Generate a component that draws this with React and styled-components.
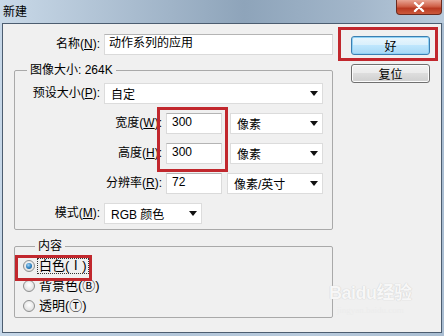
import { createGlobalStyle, styled, css } from "styled-components";

const Global = createGlobalStyle`
    html, body {
        margin: 0;
        padding: 0;
        background: #c3d4e5;
    }
    * { box-sizing: border-box; }
`

const Window = styled.div`
    width: 444px;
    height: 336px;
    overflow: hidden;
    background: linear-gradient(90deg, #c6d7e8 0%, #b3c6d9 40%, #b8cadc 70%, #a9bdd1 100%);
    font-family: "Liberation Sans", "Noto Sans CJK SC", sans-serif;
    font-size: 12px;
    color: #000;
`

const TitleBar = styled.div`
    height: 23px;
    display: flex;
    justify-content: space-between;
    align-items: flex-start;
    padding-left: 3px;
    background: linear-gradient(90deg, #c9d9e8 0%, #a9bccf 30%, #8ea4ba 55%, #a2b6ca 80%, #b9cbdc 100%);
`

const Title = styled.div`
    padding-top: 4px;
    line-height: 14px;
    font-family: "Noto Sans CJK SC", sans-serif;
    font-size: 12px;
`

const CloseBtn = styled.div`
    width: 46px;
    height: 15px;
    margin-right: 2px;
    border: 1px solid #6b2a1e;
    border-top: none;
    border-radius: 0 0 4px 4px;
    background: linear-gradient(180deg, #e8a493 0%, #d0624a 45%, #b93a22 60%, #cc5a3c 100%);
    display: flex;
    justify-content: center;
    align-items: center;
`

const Body = styled.div`
    position: relative;
    height: 310px;
    margin: 0 2px;
    border: 1px solid #4c5d70;
    background: #f0f0f0;
    display: flex;
`

const LeftCol = styled.div`
    width: 330px;
    padding-left: 11px;
`

const RightCol = styled.div`
    display: flex;
    flex-direction: column;
    gap: 9px;
    padding-top: 12px;
    margin-left: 18px;
`

const Row = styled.div`
    display: flex;
    align-items: center;
    height: 21px;
    margin-top: ${p => p.$mt || 0}px;
`

const Label = styled.div`
    width: ${p => p.$w}px;
    margin-right: 4px;
    text-align: right;
    white-space: nowrap;
    line-height: 21px;

    u {
        text-underline-offset: 1px;
    }
`

const Field = styled.div`
    width: ${p => p.$w}px;
    height: 21px;
    margin-right: ${p => p.$mr || 0}px;
    background: #fff;
    border: 1px solid #dadada;
    border-top-color: #b4b4b4;
    padding-left: ${p => p.$pl || 5}px;
    line-height: 17px;
    white-space: nowrap;
`

const Select = styled.div`
    width: ${p => p.$w}px;
    height: 21px;
    background: #fff;
    border: 1px solid #dcdcdc;
    display: flex;
    align-items: center;
    justify-content: space-between;
    padding: 0 4px 0 6px;
    white-space: nowrap;
`

const Group = styled.fieldset`
    margin: ${p => p.$mt}px 0 0 0;
    padding: ${p => p.$pad};
    border: 1px solid #a9a9a9;
    border-radius: 2px;
    min-width: 0;

    legend {
        margin-left: 12px;
        padding: 0 3px;
        line-height: 14px;
        font-size: 12px;
    }
`

const RowStack = styled.div`
    display: flex;
    flex-direction: column;
    gap: ${p => p.$gap}px;
`

const RadioRow = styled.div`
    display: flex;
    align-items: center;
    height: 20px;
    font-size: 13px;
`

const RadioDot = styled.span`
    width: 12px;
    height: 12px;
    border-radius: 50%;
    margin-right: 3px;
    border: 1px solid #8e8f8f;
    background: radial-gradient(circle at 50% 40%, #ffffff 0%, #e6e6e6 60%, #cfcfcf 100%);
    display: inline-flex;
    align-items: center;
    justify-content: center;

    ${p => p.$checked && css`
        &::after {
            content: "";
            width: 6px;
            height: 6px;
            border-radius: 50%;
            background: radial-gradient(circle at 40% 35%, #a5d4f5 0%, #2a7fbf 55%, #1b4f7d 100%);
        }
    `}
`

const RadioText = styled.span`
    line-height: 14px;
    padding: 0 1px;
    outline: ${p => p.$focus ? "1px dotted #333" : "none"};
`

const Button = styled.div`
    width: 79px;
    height: 19px;
    border-radius: 3px;
    display: flex;
    align-items: center;
    justify-content: center;
    font-family: "Noto Sans CJK SC", sans-serif;
    font-size: 12px;
    border: 1px solid ${p => p.$primary ? "#3c7fb1" : "#707070"};
    background: ${p => p.$primary
        ? "linear-gradient(180deg, #eaf6fd 0%, #d9f0fc 45%, #bee6fd 50%, #a7d9f5 100%)"
        : "linear-gradient(180deg, #f2f2f2 0%, #ebebeb 45%, #dddddd 50%, #cfcfcf 100%)"};
    box-shadow: inset 0 0 0 1px ${p => p.$primary ? "#90d2f5" : "#fcfcfc"};
`

const Highlight = styled.div`
    position: absolute;
    left: ${p => p.$x - 3}px;
    top: ${p => p.$y - 24}px;
    width: ${p => p.$w}px;
    height: ${p => p.$h}px;
    border: 3px solid #c1272d;
    pointer-events: none;
`

const Watermark = styled.div`
    position: absolute;
    left: 326px;
    top: 258px;
    display: flex;
    flex-direction: column;
    align-items: center;
    color: #f7f7f7;
    text-shadow: 0 0 1px #d2d2d2, 0 0 1px #d2d2d2;
    pointer-events: none;

    b {
        font-family: "Liberation Sans", "Noto Sans CJK SC", sans-serif;
        font-size: 18px;
        line-height: 22px;
        letter-spacing: -0.5px;
    }

    span {
        font-family: "Liberation Serif", serif;
        font-size: 9px;
        line-height: 12px;
        color: #ececec;
        text-shadow: none;
    }
`

const Arrow = () => (
    <svg width="8" height="5" viewBox="0 0 8 5">
        <path d="M0 0 H8 L4 5 Z" fill="#111" />
    </svg>
)

function App() {
    return (
        <Window>
            <Global />
            <TitleBar>
                <Title>新建</Title>
                <CloseBtn>
                    <svg width="12" height="10" viewBox="0 0 12 10">
                        <path d="M2 1 L10 9 M10 1 L2 9" stroke="#fff" strokeWidth="2.4" strokeLinecap="round" />
                    </svg>
                </CloseBtn>
            </TitleBar>
            <Body>
                <LeftCol>
                    <Row $mt={10}>
                        <Label $w={86}>名称(<u>N</u>):</Label>
                        <Field $w={229} $pl={4}>动作系列的应用</Field>
                    </Row>

                    <Group $mt={8} $pad="6px 8px 5px 0">
                        <legend>图像大小: 264K</legend>
                        <RowStack $gap={9}>
                            <Row>
                                <Label $w={85}>预设大小(<u>P</u>):</Label>
                                <Select $w={219}>自定<Arrow /></Select>
                            </Row>
                            <Row>
                                <Label $w={147}>宽度(<u>W</u>):</Label>
                                <Field $w={56} $mr={8}>300</Field>
                                <Select $w={93}>像素<Arrow /></Select>
                            </Row>
                            <Row>
                                <Label $w={147}>高度(<u>H</u>):</Label>
                                <Field $w={56} $mr={8}>300</Field>
                                <Select $w={93}>像素<Arrow /></Select>
                            </Row>
                            <Row>
                                <Label $w={147}>分辨率(<u>R</u>):</Label>
                                <Field $w={56} $mr={5}>72</Field>
                                <Select $w={96}>像素/英寸<Arrow /></Select>
                            </Row>
                            <Row>
                                <Label $w={85}>模式(<u>M</u>):</Label>
                                <Select $w={98}>RGB 颜色<Arrow /></Select>
                            </Row>
                        </RowStack>
                    </Group>

                    <Group $mt={9} $pad="3px 8px 1px 8px">
                        <legend>内容</legend>
                        <RowStack $gap={0}>
                            <RadioRow>
                                <RadioDot $checked />
                                <RadioText $focus>白色(Ⅰ)</RadioText>
                            </RadioRow>
                            <RadioRow>
                                <RadioDot />
                                <RadioText>背景色(Ⓑ)</RadioText>
                            </RadioRow>
                            <RadioRow>
                                <RadioDot />
                                <RadioText>透明(Ⓣ)</RadioText>
                            </RadioRow>
                        </RowStack>
                    </Group>
                </LeftCol>

                <RightCol>
                    <Button $primary>好</Button>
                    <Button>复位</Button>
                </RightCol>

                <Highlight $x={338} $y={27} $w={100} $h={34} />
                <Highlight $x={157} $y={107} $w={71} $h={65} />
                <Highlight $x={15} $y={255} $w={77} $h={26} />

                <Watermark>
                    <b>Baidu经验</b>
                    <span>jingyan.baidu.com</span>
                </Watermark>
            </Body>
        </Window>
    );
}

export default App;
